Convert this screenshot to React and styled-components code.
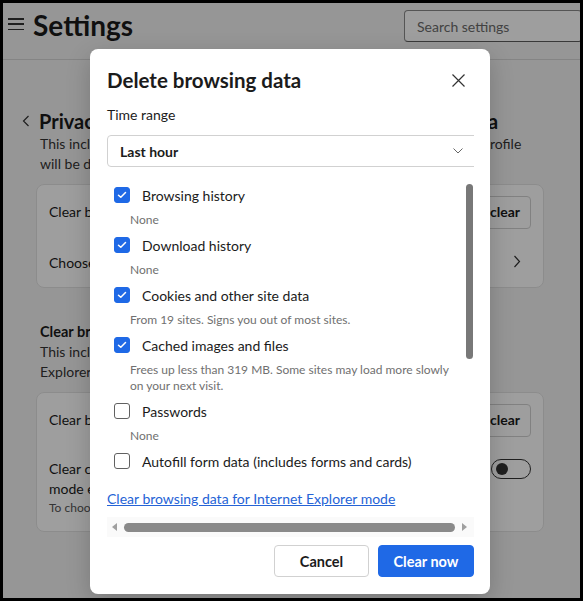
import React from "react";
import styled, { createGlobalStyle } from "styled-components";

const FONT = `Lato, "Noto Sans", "Liberation Sans", sans-serif`;

const Global = createGlobalStyle`
  html, body { margin: 0; padding: 0; background: #000; }
  * { box-sizing: border-box; }
  body { font-family: ${FONT}; }
`;

const Frame = styled.div`
  position: relative;
  width: 583px;
  height: 601px;
  border: 3px solid #000;
  background: #f3f3f3;
  overflow: hidden;
  font-family: ${FONT};
  color: #1b1b1b;
`;

const Header = styled.header`
  height: 57px;
  display: flex;
  align-items: flex-start;
  border-bottom: 1px solid #d6d6d6;
  padding: 0 0 0 5px;
`;

const MenuButton = styled.div`
  width: 16px;
  height: 12px;
  margin-top: 15px;
  display: flex;
  flex-direction: column;
  justify-content: space-between;
  span { display: block; height: 1.5px; background: #333; }
`;

const PageTitle = styled.h1`
  margin: 2px 0 0 9px;
  font-size: 28px;
  font-weight: 700;
  line-height: 40px;
  color: #1b1b1b;
`;

const SearchBox = styled.div`
  margin: 7px 0 0 auto;
  width: 178px;
  height: 32px;
  border: 1px solid #8a8a8a;
  border-bottom-color: #5c5c5c;
  border-radius: 4px;
  background: #fff;
  display: flex;
  align-items: center;
  padding-left: 12px;
  font-size: 14px;
  color: #6b6b6b;
  transform: translateX(2px);
`;

const Content = styled.main`
  padding: 0 36px 0 33px;
`;

const TitleRow = styled.div`
  display: flex;
  align-items: center;
  margin-top: 47px;
  margin-left: -14px;
  gap: 9px;
`;

const SectionHeading = styled.h2`
  margin: 0;
  font-size: 20px;
  font-weight: 700;
  line-height: 28px;
  white-space: nowrap;
`;

const Para = styled.p`
  margin: ${(p) => p.$mt || 0}px 0 0 4px;
  font-size: 14px;
  line-height: 20px;
  color: #333;
  white-space: nowrap;
`;

const Card = styled.section`
  margin-top: ${(p) => p.$mt || 0}px;
  background: #fff;
  border: 1px solid #e3e3e3;
  border-radius: 8px;
  padding: 0 12px;
`;

const CardRow = styled.div`
  display: flex;
  align-items: ${(p) => (p.$top ? "flex-start" : "center")};
  justify-content: space-between;
  min-height: ${(p) => p.$h || 48}px;
  padding-top: ${(p) => (p.$top ? 12 : 0)}px;
  font-size: 14px;
  line-height: 20px;
  color: #1b1b1b;
  white-space: nowrap;
`;

const GhostButton = styled.div`
  height: 33px;
  padding: 0 10px;
  border: 1px solid #d1d1d1;
  border-radius: 4px;
  display: flex;
  align-items: center;
  font-size: 14px;
  font-weight: 700;
  background: #fff;
`;

const SubTitle = styled.h3`
  margin: 34px 0 0 4px;
  font-size: 14.5px;
  font-weight: 700;
  line-height: 20px;
`;

const Small = styled.div`
  font-size: 12px;
  color: #555;
  line-height: 18px;
`;

const Toggle = styled.div`
  width: 40px;
  height: 20px;
  border: 1px solid #333;
  border-radius: 10px;
  position: relative;
  &::after {
    content: "";
    position: absolute;
    left: 4px;
    top: 3px;
    width: 12px;
    height: 12px;
    border-radius: 50%;
    background: #333;
  }
`;

const Overlay = styled.div`
  position: absolute;
  inset: 0;
  background: rgba(0, 0, 0, 0.38);
`;

const Dialog = styled.div`
  position: absolute;
  left: 87px;
  top: 46px;
  width: 400px;
  height: 545px;
  background: #fff;
  border-radius: 8px;
  box-shadow: 0 8px 24px rgba(0, 0, 0, 0.2);
  padding: 17px 16px 17px 17px;
  display: flex;
  flex-direction: column;
`;

const DialogHead = styled.div`
  display: flex;
  align-items: center;
  justify-content: space-between;
  height: 28px;
`;

const DialogTitle = styled.h2`
  margin: 0;
  font-size: 20.5px;
  font-weight: 700;
  color: #1b1b1b;
`;

const CloseBtn = styled.div`
  width: 28px;
  height: 28px;
  display: flex;
  align-items: center;
  justify-content: center;
  margin-right: 2px;
`;

const FieldLabel = styled.div`
  margin-top: 11px;
  font-size: 14px;
  line-height: 20px;
  color: #1b1b1b;
`;

const Viewport = styled.div`
  margin-top: 10px;
  width: 367px;
  overflow: hidden;
  position: relative;
`;

const Select = styled.div`
  width: 385px;
  height: 32px;
  border: 1px solid #d1d1d1;
  border-radius: 4px;
  display: flex;
  align-items: center;
  justify-content: space-between;
  padding: 0 28px 0 12px;
  font-size: 14px;
  font-weight: 700;
  color: #1b1b1b;
`;

const List = styled.div`
  position: relative;
  margin-top: 18px;
  padding-left: 7px;
  display: flex;
  flex-direction: column;
  gap: 7px;
`;

const Item = styled.div`
  display: flex;
  flex-direction: column;
  gap: 7px;
`;

const CheckRow = styled.label`
  display: flex;
  align-items: center;
  height: 20px;
  gap: 12px;
  font-size: 14px;
  color: #1b1b1b;
  white-space: nowrap;
`;

const Box = styled.span`
  width: 16px;
  height: 16px;
  border-radius: 3px;
  flex: none;
  display: flex;
  align-items: center;
  justify-content: center;
  background: ${(p) => (p.$on ? "#1f69e6" : "#fff")};
  border: 1px solid ${(p) => (p.$on ? "#1f69e6" : "#616161")};
`;

const Desc = styled.div`
  padding-left: 16px;
  font-size: 12px;
  line-height: 16px;
  color: #707070;
  white-space: pre-line;
`;

const VThumb = styled.div`
  position: absolute;
  right: 1px;
  top: -1px;
  width: 7px;
  height: 175px;
  border-radius: 4px;
  background: #787878;
`;

const Link = styled.a`
  display: block;
  margin-top: 18px;
  font-size: 14px;
  line-height: 20px;
  color: #2563d6;
  text-decoration: underline;
  white-space: nowrap;
`;

const HScroll = styled.div`
  margin-top: 8px;
  height: 20px;
  width: 367px;
  background: #fafafa;
  display: flex;
  align-items: center;
  padding: 0 7px 0 5px;
  gap: 7px;
`;

const HThumb = styled.div`
  flex: 1;
  height: 9px;
  border-radius: 5px;
  background: #8a8a8a;
`;

const Arrow = styled.span`
  width: 0;
  height: 0;
  border-top: 4px solid transparent;
  border-bottom: 4px solid transparent;
  ${(p) =>
    p.$dir === "left"
      ? "border-right: 5px solid #a0a0a0;"
      : "border-left: 5px solid #a0a0a0;"}
`;

const Footer = styled.div`
  margin-top: auto;
  display: flex;
  justify-content: flex-end;
  gap: 9px;
`;

const Button = styled.button`
  height: 32px;
  width: ${(p) => (p.$primary ? 96 : 95)}px;
  border-radius: 4px;
  font-family: ${FONT};
  font-size: 14.5px;
  font-weight: 700;
  border: 1px solid ${(p) => (p.$primary ? "#1f69e6" : "#d1d1d1")};
  background: ${(p) => (p.$primary ? "#1f69e6" : "#fff")};
  color: ${(p) => (p.$primary ? "#fff" : "#1b1b1b")};
`;

const Check = () => (
  <svg width="10" height="8" viewBox="0 0 10 8">
    <polyline points="1.5,4.2 3.8,6.3 8.5,1.5" fill="none" stroke="#fff" strokeWidth="1.5" strokeLinecap="round" strokeLinejoin="round" />
  </svg>
);

const items = [
  { label: "Browsing history", on: true, desc: "None" },
  { label: "Download history", on: true, desc: "None" },
  { label: "Cookies and other site data", on: true, desc: "From 19 sites. Signs you out of most sites." },
  { label: "Cached images and files", on: true, desc: "Frees up less than 319 MB. Some sites may load more slowly\non your next visit." },
  { label: "Passwords", on: false, desc: "None" },
  { label: "Autofill form data (includes forms and cards)", on: false },
];

export default function App() {
  return (
    <>
      <Global />
      <Frame>
        <Header>
          <MenuButton><span /><span /><span /></MenuButton>
          <PageTitle>Settings</PageTitle>
          <SearchBox>Search settings</SearchBox>
        </Header>
        <Content>
          <TitleRow>
            <svg width="8" height="12" viewBox="0 0 8 12">
              <polyline points="6.5,1 1.5,6 6.5,11" fill="none" stroke="#333" strokeWidth="1.2" />
            </svg>
            <SectionHeading>Privacy, search, and services / Delete browsing data</SectionHeading>
          </TitleRow>
          <Para $mt={-1}>This includes history, passwords, cookies, and more. Only data from this profile</Para>
          <Para>will be deleted. Manage your data</Para>
          <Card $mt={10}>
            <CardRow $h={54}>
              <span>Clear browsing data now</span>
              <GhostButton>Choose what to clear</GhostButton>
            </CardRow>
            <CardRow $h={48}>
              <span>Choose what to clear every time you close the browser</span>
              <svg width="8" height="13" viewBox="0 0 8 13" style={{ marginRight: 10, marginTop: -4 }}>
                <polyline points="1.5,1 6.5,6.5 1.5,12" fill="none" stroke="#333" strokeWidth="1.2" />
              </svg>
            </CardRow>
          </Card>
          <SubTitle>Clear browsing data for Internet Explorer mode</SubTitle>
          <Para>This includes history, cookies, and more. Data will be cleared for Internet</Para>
          <Para>Explorer mode in Microsoft Edge.</Para>
          <Card $mt={10}>
            <CardRow $h={54}>
              <span>Clear browsing data for Internet Explorer mode now</span>
              <GhostButton>Choose what to clear</GhostButton>
            </CardRow>
            <CardRow $h={84} $top>
              <div>
                <div>Clear chosen data for Internet Explorer and Internet Explorer</div>
                <div>mode every time you close Microsoft Edge</div>
                <Small>To choose what to clear, go to the delete browsing history menu</Small>
              </div>
              <Toggle />
            </CardRow>
          </Card>
        </Content>
        <Overlay />
        <Dialog role="dialog">
          <DialogHead>
            <DialogTitle>Delete browsing data</DialogTitle>
            <CloseBtn>
              <svg width="13" height="13" viewBox="0 0 13 13">
                <path d="M0.5 0.5 L12.5 12.5 M12.5 0.5 L0.5 12.5" stroke="#333" strokeWidth="1.2" />
              </svg>
            </CloseBtn>
          </DialogHead>
          <FieldLabel>Time range</FieldLabel>
          <Viewport>
            <Select>
              <span>Last hour</span>
              <svg width="10" height="6" viewBox="0 0 10 6">
                <polyline points="0.5,0.5 5,5 9.5,0.5" fill="none" stroke="#666" strokeWidth="1" />
              </svg>
            </Select>
            <List>
              <VThumb />
              {items.map((it) => (
                <Item key={it.label}>
                  <CheckRow>
                    <Box $on={it.on}>{it.on && <Check />}</Box>
                    {it.label}
                  </CheckRow>
                  {it.desc && <Desc>{it.desc}</Desc>}
                </Item>
              ))}
            </List>
            <Link href="#">Clear browsing data for Internet Explorer mode</Link>
          </Viewport>
          <HScroll>
            <Arrow $dir="left" />
            <HThumb />
            <Arrow $dir="right" />
          </HScroll>
          <Footer>
            <Button>Cancel</Button>
            <Button $primary>Clear now</Button>
          </Footer>
        </Dialog>
      </Frame>
    </>
  );
}
